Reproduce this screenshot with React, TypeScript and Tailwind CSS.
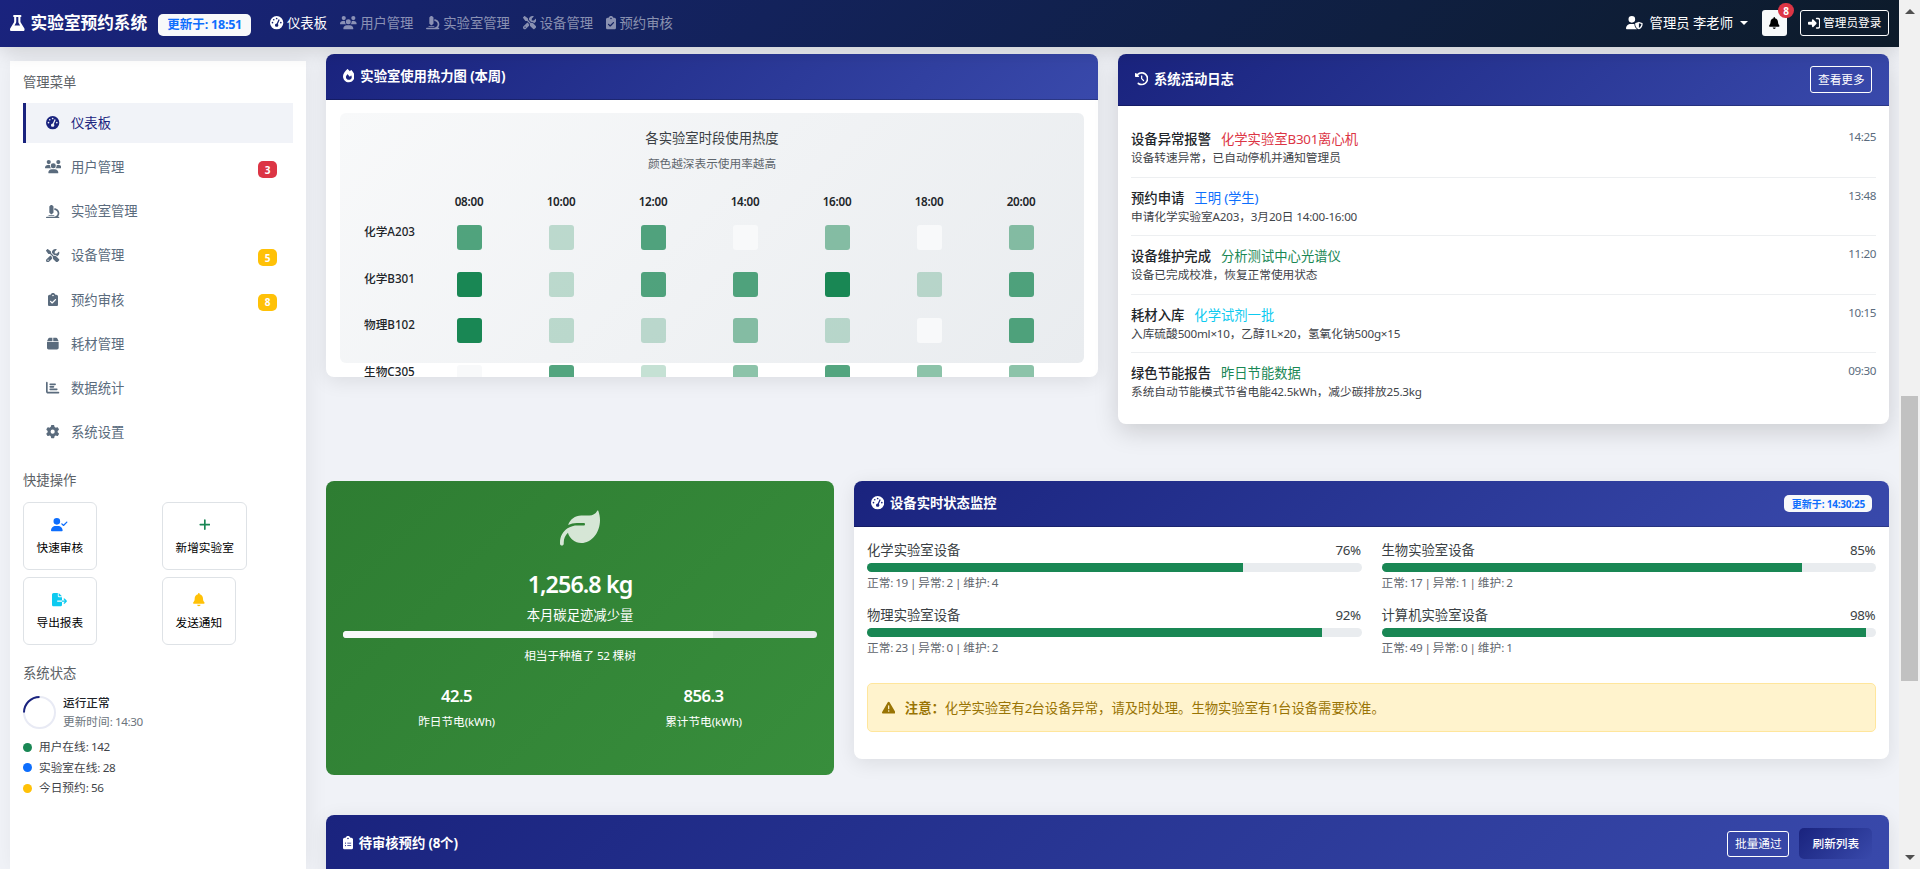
import type { ReactNode } from "react";
import clsx from "clsx";
import type { IconType } from "react-icons";
import {
  FaBell,
  FaBox,
  FaChartBar,
  FaClipboardCheck,
  FaClipboardList,
  FaClockRotateLeft,
  FaFileExport,
  FaFire,
  FaFlask,
  FaGaugeHigh,
  FaGear,
  FaLeaf,
  FaMicroscope,
  FaPlus,
  FaRightToBracket,
  FaScrewdriverWrench,
  FaTriangleExclamation,
  FaUserCheck,
  FaUserShield,
  FaUsers,
} from "react-icons/fa6";

interface NavItem {
  label: string;
  icon: IconType;
  active?: boolean;
  badge?: number;
  badgeColor?: string;
}

const NAV_ITEMS: NavItem[] = [
  { label: "仪表板", icon: FaGaugeHigh, active: true },
  { label: "用户管理", icon: FaUsers },
  { label: "实验室管理", icon: FaMicroscope },
  { label: "设备管理", icon: FaScrewdriverWrench },
  { label: "预约审核", icon: FaClipboardCheck },
];

const MENU_ITEMS: NavItem[] = [
  { label: "仪表板", icon: FaGaugeHigh, active: true },
  { label: "用户管理", icon: FaUsers, badge: 3, badgeColor: "bg-[#dc3545]" },
  { label: "实验室管理", icon: FaMicroscope },
  { label: "设备管理", icon: FaScrewdriverWrench, badge: 5, badgeColor: "bg-[#ffc107]" },
  { label: "预约审核", icon: FaClipboardCheck, badge: 8, badgeColor: "bg-[#ffc107]" },
  { label: "耗材管理", icon: FaBox },
  { label: "数据统计", icon: FaChartBar },
  { label: "系统设置", icon: FaGear },
];

const QUICK_ACTIONS = [
  { label: "快速审核", icon: FaUserCheck, color: "text-[#0d6efd]" },
  { label: "新增实验室", icon: FaPlus, color: "text-[#198754]" },
  { label: "导出报表", icon: FaFileExport, color: "text-[#0dcaf0]" },
  { label: "发送通知", icon: FaBell, color: "text-[#ffc107]" },
];

const ONLINE_STATS = [
  { label: "用户在线: 142", color: "bg-[#198754]" },
  { label: "实验室在线: 28", color: "bg-[#0d6efd]" },
  { label: "今日预约: 56", color: "bg-[#ffc107]" },
];

const HOURS = ["08:00", "10:00", "12:00", "14:00", "16:00", "18:00", "20:00"];

const HEAT_ROWS = [
  { lab: "化学A203", levels: [3, 1, 3, 0, 2, 0, 2] },
  { lab: "化学B301", levels: [4, 1, 3, 3, 4, 1, 3] },
  { lab: "物理B102", levels: [4, 1, 1, 2, 1, 0, 3] },
  { lab: "生物C305", levels: [0, 3, 1, 2, 3, 2, 2] },
];

const HEAT_COLORS = [
  "bg-[#f8f9fa]",
  "bg-[#198754]/25",
  "bg-[#198754]/50",
  "bg-[#198754]/75",
  "bg-[#198754]",
];

const LOGS = [
  { title: "设备异常报警", target: "化学实验室B301离心机", color: "text-[#dc3545]", desc: "设备转速异常，已自动停机并通知管理员", time: "14:25" },
  { title: "预约申请", target: "王明 (学生)", color: "text-[#0d6efd]", desc: "申请化学实验室A203，3月20日 14:00-16:00", time: "13:48" },
  { title: "设备维护完成", target: "分析测试中心光谱仪", color: "text-[#198754]", desc: "设备已完成校准，恢复正常使用状态", time: "11:20" },
  { title: "耗材入库", target: "化学试剂一批", color: "text-[#0dcaf0]", desc: "入库硫酸500ml×10，乙醇1L×20，氢氧化钠500g×15", time: "10:15" },
  { title: "绿色节能报告", target: "昨日节能数据", color: "text-[#198754]", desc: "系统自动节能模式节省电能42.5kWh，减少碳排放25.3kg", time: "09:30" },
];

const DEVICES = [
  { name: "化学实验室设备", percent: 76, detail: "正常: 19 | 异常: 2 | 维护: 4" },
  { name: "生物实验室设备", percent: 85, detail: "正常: 17 | 异常: 1 | 维护: 2" },
  { name: "物理实验室设备", percent: 92, detail: "正常: 23 | 异常: 0 | 维护: 2" },
  { name: "计算机实验室设备", percent: 98, detail: "正常: 49 | 异常: 0 | 维护: 1" },
];

// react-icons forces every glyph into a 1em square, these need their natural width
const ICON_WIDTHS = new Map<IconType, string>([
  [FaUsers, "w-[1.25em]"],
  [FaUserCheck, "w-[1.25em]"],
  [FaUserShield, "w-[1.25em]"],
  [FaFileExport, "w-[1.125em]"],
  [FaFlask, "w-[0.875em]"],
  [FaFire, "w-[0.875em]"],
  [FaBell, "w-[0.875em]"],
  [FaBox, "w-[0.875em]"],
  [FaPlus, "w-[0.875em]"],
  [FaClipboardCheck, "w-[0.75em]"],
  [FaClipboardList, "w-[0.75em]"],
]);

function Glyph({ icon: Icon, className }: { icon: IconType; className?: string }) {
  return <Icon className={clsx("h-[1em] shrink-0", ICON_WIDTHS.get(Icon) ?? "w-[1em]", className)} />;
}

function Mixed({ text, className = "tracking-[-0.02em]" }: { text: string; className?: string }) {
  return (
    <>
      {text.split(/([\x20-\x7e×]+)/).map((part, i) =>
        i % 2 === 1 ? (
          <span key={i} className={className}>
            {part}
          </span>
        ) : (
          part
        )
      )}
    </>
  );
}

function CardHeader({
  icon,
  title,
  className,
  children,
}: {
  icon: IconType;
  title: string;
  className?: string;
  children?: ReactNode;
}) {
  return (
    <div
      className={clsx(
        "flex shrink-0 items-center justify-between border-b border-black/20 bg-linear-135 from-[#1a237e] to-[#3949ab] px-[16.67px] text-white",
        className
      )}
    >
      <div className="flex items-center gap-[6px] pb-px font-bold whitespace-pre">
        <Glyph icon={icon} />
        <span>
          <Mixed text={title} />
        </span>
      </div>
      {children}
    </div>
  );
}

function OutlineButton({ children, className }: { children: ReactNode; className?: string }) {
  return (
    <button
      type="button"
      className={clsx(
        "flex items-center justify-center rounded-[3px] border border-white text-[11.67px] text-white",
        className
      )}
    >
      {children}
    </button>
  );
}

function Navbar() {
  return (
    <nav className="relative z-10 flex h-[47px] shrink-0 items-center bg-linear-135 from-[#1a237e] to-[#0d1b2a] px-[10px] pb-px text-white shadow-[0_4px_20px_rgba(0,0,0,0.15)]">
      <Glyph icon={FaFlask} className="text-[16.67px]" />
      <span className="ml-[6px] text-[16.67px] font-bold">实验室预约系统</span>
      <span className="mt-[3px] ml-[11px] flex h-[22px] w-[93px] items-center justify-center rounded-[5px] bg-[#f8f9fa] text-[12.5px] font-bold whitespace-pre text-[#0d6efd]">
        <Mixed text="更新于: 18:51" />
      </span>
      <div className="ml-[19px] flex items-center gap-[13px]">
        {NAV_ITEMS.map(({ label, icon, active }) => (
          <a
            key={label}
            className={clsx("flex items-center gap-[3.5px]", active ? "text-white" : "text-white/50")}
          >
            <Glyph icon={icon} />
            {label}
          </a>
        ))}
      </div>
      <div className="ml-auto flex items-center">
        <Glyph icon={FaUserShield} />
        <span className="ml-[7px] whitespace-pre">管理员 李老师</span>
        <span className="ml-[7px] border-x-4 border-t-4 border-x-transparent border-t-white" />
        <button
          type="button"
          className="relative ml-[14px] flex h-[26px] w-[25px] items-center justify-center rounded-[3px] bg-[#f8f9fa] text-[12px] text-black"
        >
          <Glyph icon={FaBell} />
          <span className="absolute -top-[7px] -right-[7px] flex h-[15px] w-4 items-center justify-center rounded-full bg-[#dc3545] text-[10px] font-bold text-white">
            8
          </span>
        </button>
        <OutlineButton className="ml-[13px] h-[26px] w-[89px] gap-[3px]">
          <Glyph icon={FaRightToBracket} className="text-[12.5px]" />
          管理员登录
        </OutlineButton>
      </div>
    </nav>
  );
}

function Sidebar() {
  return (
    <aside className="mt-[14px] ml-[10px] w-[296px] shrink-0 bg-white px-[13px] pt-[11px] shadow-[3px_0_20px_rgba(0,0,0,0.06)]">
      <h6 className="h-5 text-[#5c6166]">管理菜单</h6>
      <ul className="mt-[11px] flex flex-col gap-[4.14px]">
        {MENU_ITEMS.map(({ label, icon, active, badge, badgeColor }) => (
          <li
            key={label}
            className={clsx(
              "flex h-10 items-center border-l-3 pr-4 pl-[19px]",
              active
                ? "border-[#1a237e] bg-[#f1f3f8] text-[#1a237e]"
                : "border-transparent text-[#5a6b7d]"
            )}
          >
            <span className="flex w-4 justify-center">
              <Glyph icon={icon} />
            </span>
            <span className="ml-[10px]">{label}</span>
            {badge && (
              <span
                className={clsx(
                  "mt-[5px] ml-auto flex h-[17px] w-[19px] items-center justify-center rounded-[5px] text-[10px] font-bold text-white",
                  badgeColor
                )}
              >
                {badge}
              </span>
            )}
          </li>
        ))}
      </ul>

      <h6 className="mt-[18px] h-5 text-[#5c6166]">快捷操作</h6>
      <div className="mt-3 grid grid-cols-2 justify-items-start gap-x-[8px] gap-y-[7px]">
        {QUICK_ACTIONS.map(({ label, icon, color }) => (
          <button
            key={label}
            type="button"
            className="flex h-[68px] flex-col items-center justify-center gap-[6px] rounded-[6px] border border-[#dee2e6] px-[12.5px] pt-[2px] text-[11.67px] text-black"
          >
            <Glyph icon={icon} className={clsx("text-[13.33px]", color)} />
            <span className="h-[18px]">{label}</span>
          </button>
        ))}
      </div>

      <h6 className="mt-[18px] h-5 text-[#5c6166]">系统状态</h6>
      <div className="mt-[11px] flex items-center">
        <svg width="33" height="33" viewBox="0 0 33 33" fill="none" strokeWidth="2">
          <circle cx="16.5" cy="16.5" r="15.5" stroke="#e8eaf4" />
          <path d="M1 16.5A15.5 15.5 0 0 1 16.5 1" stroke="#1a237e" />
        </svg>
        <div className="-mt-px ml-[7px] text-[11.67px] leading-[19.5px]">
          <div className="font-medium text-[#212529]">运行正常</div>
          <div className="text-[#6c757d]">
            <Mixed text="更新时间: 14:30" className="tracking-[-0.035em]" />
          </div>
        </div>
      </div>
      <ul className="mt-[5px] text-[11.67px] leading-[20.7px] text-[#3f4449]">
        {ONLINE_STATS.map((stat) => (
          <li key={stat.label} className="flex items-center gap-[7px]">
            <span className={clsx("h-[9px] w-[9px] rounded-full", stat.color)} />
            <span>
              <Mixed text={stat.label} className="tracking-[-0.035em]" />
            </span>
          </li>
        ))}
      </ul>
    </aside>
  );
}

function HeatmapCard() {
  return (
    <section className="h-[323px] w-[772px] overflow-hidden rounded-lg bg-white shadow-[0_4px_20px_rgba(0,0,0,0.09)]">
      <CardHeader icon={FaFire} title="实验室使用热力图 (本周)" className="h-[46px]" />
      <div className="px-[14px] pt-[13px]">
        <div className="h-[250px] rounded-[6px] bg-linear-135 from-[#f8f9fa] to-[#e9ecef] pt-[15px] text-[#212529]">
          <div className="text-center leading-5 text-[#3a3f44]">各实验室时段使用热度</div>
          <div className="mt-[7px] text-center text-[11.67px] leading-[18px] text-[#5f666d]">
            颜色越深表示使用率越高
          </div>
          <div className="mt-5 flex pl-[83px] text-[11.67px] leading-[18px] font-semibold">
            {HOURS.map((hour) => (
              <div key={hour} className="w-[92px] text-center tracking-[-0.02em]">
                {hour}
              </div>
            ))}
          </div>
          <div className="mt-[14px]">
            {HEAT_ROWS.map((row) => (
              <div key={row.lab} className="flex h-[46.67px] pl-[24px]">
                <div className="-mt-[2px] w-[59px] text-[11.67px] leading-[18px] font-medium">
                  <Mixed text={row.lab} className="tracking-normal" />
                </div>
                {row.levels.map((level, i) => (
                  <div key={i} className="flex w-[92px] justify-center">
                    <div className={clsx("h-[25px] w-[25px] rounded-[3px]", HEAT_COLORS[level])} />
                  </div>
                ))}
              </div>
            ))}
          </div>
        </div>
      </div>
    </section>
  );
}

function ActivityCard() {
  return (
    <section className="h-[370px] w-[771px] overflow-hidden rounded-lg bg-white shadow-[0_8px_25px_rgba(0,0,0,0.15)]">
      <CardHeader icon={FaClockRotateLeft} title="系统活动日志" className="h-[52px]">
        <OutlineButton className="h-[27px] w-[62px]">查看更多</OutlineButton>
      </CardHeader>
      <ul className="px-[13px] pt-[13px]">
        {LOGS.map((log) => (
          <li
            key={log.title}
            className="flex justify-between border-b border-[#edeff1] py-[10px] last:border-b-0"
          >
            <div>
              <div className="flex gap-[10px] leading-5">
                <span className="font-medium text-[#212529]">{log.title}</span>
                <span className={log.color}>
                  <Mixed text={log.target} />
                </span>
              </div>
              <div className="text-[11.67px] leading-[17.5px] text-[#3f4449]">
                <Mixed text={log.desc} />
              </div>
            </div>
            <span className="text-[11.67px] leading-[16px] tracking-[-0.035em] text-[#5a6b7d]">{log.time}</span>
          </li>
        ))}
      </ul>
    </section>
  );
}

function CarbonCard() {
  return (
    <section className="h-[294px] w-[508px] rounded-lg bg-linear-135 from-[#2e7d32] to-[#388e3c] px-[17px] pt-[27px] text-center text-white">
      <Glyph icon={FaLeaf} className="mx-auto text-[40px] opacity-80" />
      <div className="mt-[22px] text-[23.33px] leading-[28px] font-semibold tracking-[-0.04em]">1,256.8 kg</div>
      <div className="mt-[7px] leading-5">本月碳足迹减少量</div>
      <div className="mt-[6px] h-[7px] overflow-hidden rounded-full bg-[#e9ecef]">
        <div className="h-full w-[78%] bg-[#f8f9fa]" />
      </div>
      <div className="mt-[9px] text-[11.67px] leading-[18px]">
        <Mixed text="相当于种植了 52 棵树" />
      </div>
      <div className="-mr-[10px] -ml-[10px] mt-[21px] grid grid-cols-2">
        <div>
          <div className="text-[16.67px] leading-5 font-semibold tracking-[-0.035em]">42.5</div>
          <div className="mt-[7px] text-[11.67px] leading-[18px]">
            <Mixed text="昨日节电(kWh)" />
          </div>
        </div>
        <div>
          <div className="text-[16.67px] leading-5 font-semibold tracking-[-0.035em]">856.3</div>
          <div className="mt-[7px] text-[11.67px] leading-[18px]">
            <Mixed text="累计节电(kWh)" />
          </div>
        </div>
      </div>
    </section>
  );
}

function DeviceCard() {
  return (
    <section className="h-[278px] w-[1035px] overflow-hidden rounded-lg bg-white shadow-[0_4px_20px_rgba(0,0,0,0.09)]">
      <CardHeader icon={FaGaugeHigh} title="设备实时状态监控" className="h-[46px]">
        <span className="flex h-[17px] w-[88px] items-center justify-center rounded-[5px] bg-[#f8f9fa] text-[10px] font-bold whitespace-pre text-[#0d6efd]">
          <Mixed text="更新于: 14:30:25" />
        </span>
      </CardHeader>
      <div className="px-[13px] pt-[13px]">
        <div className="grid grid-cols-2 gap-x-5">
          {DEVICES.map((device) => (
            <div key={device.name} className="h-[65px]">
              <div className="flex justify-between leading-5 text-[#3a3f44]">
                <span>{device.name}</span>
                <span className="mr-px tracking-[-0.035em]">{device.percent}%</span>
              </div>
              <div className="mt-[3px] h-[9px] overflow-hidden rounded-full bg-[#e9ecef]">
                <div className="h-full bg-[#198754]" style={{ width: `${device.percent}%` }} />
              </div>
              <div className="mt-[2px] text-[11.67px] leading-[18px] text-[#5f666d]">
                <Mixed text={device.detail} className="tracking-[-0.05em]" />
              </div>
            </div>
          ))}
        </div>
        <div className="mt-[13px] flex h-[49px] items-center rounded-[5px] border border-[#ffe69c] bg-[#fff3cd] px-[14px] text-[#997404]">
          <Glyph icon={FaTriangleExclamation} />
          <span className="ml-[9.5px] font-bold">注意：</span>
          <span>
            <Mixed
              text="化学实验室有2台设备异常，请及时处理。生物实验室有1台设备需要校准。"
              className="tracking-[-0.07em]"
            />
          </span>
        </div>
      </div>
    </section>
  );
}

function PendingCard() {
  return (
    <section className="h-[300px] overflow-hidden rounded-lg bg-white shadow-[0_4px_20px_rgba(0,0,0,0.09)]">
      <CardHeader icon={FaClipboardList} title="待审核预约 (8个)" className="h-[58px]">
        <div className="flex items-center gap-[10px]">
          <OutlineButton className="h-[26px] w-[62px]">批量通过</OutlineButton>
          <button
            type="button"
            className="h-[31px] w-[73px] rounded-[5px] bg-linear-135 from-[#1a237e] to-[#3949ab] text-[11.67px] font-medium"
          >
            刷新列表
          </button>
        </div>
      </CardHeader>
    </section>
  );
}

function Scrollbar() {
  return (
    <div className="flex w-[21px] shrink-0 flex-col items-center bg-[#f1f1f1]">
      <span className="mt-[9px] border-x-[5px] border-b-[5px] border-x-transparent border-b-[#505050]" />
      <span className="mt-[382px] h-[285px] w-[17px] bg-[#c1c1c1]" />
      <span className="mt-auto mb-[9px] border-x-[5px] border-t-[5px] border-x-transparent border-t-[#505050]" />
    </div>
  );
}

export default function App() {
  return (
    <div className="flex h-[869px] w-[1920px] overflow-hidden bg-[#f0f2f7] font-['Noto_Sans','Noto_Sans_CJK_SC',sans-serif] text-[13.33px] leading-5 text-[#212529]">
      <div className="flex min-w-0 flex-1 flex-col overflow-hidden">
        <Navbar />
        <div className="flex min-h-0 flex-1">
          <Sidebar />
          <main className="ml-5 w-[1563px] pt-[7px]">
            <div className="mb-[57px] flex items-start justify-between">
              <HeatmapCard />
              <ActivityCard />
            </div>
            <div className="mb-10 flex items-start justify-between">
              <CarbonCard />
              <DeviceCard />
            </div>
            <PendingCard />
          </main>
        </div>
      </div>
      <Scrollbar />
    </div>
  );
}
